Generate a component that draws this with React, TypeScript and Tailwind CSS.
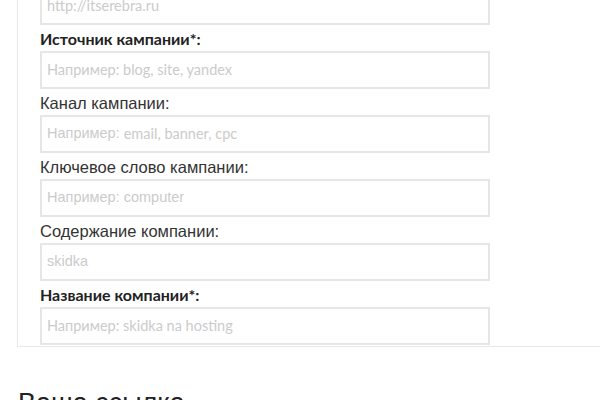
const ARIAL = "font-['Liberation_Sans',Arial,sans-serif]";
const LATO = "font-['Lato','Liberation_Sans',sans-serif]";

type Part = { text: string; lato?: boolean };

type Field = {
  label?: string;
  bold?: boolean;
  placeholder: Part[];
};

const fields: Field[] = [
  { placeholder: [{ text: "http://itserebra.ru", lato: true }] },
  {
    label: "Источник кампании*:",
    bold: true,
    placeholder: [{ text: "Например: blog, site, yandex", lato: true }],
  },
  {
    label: "Канал кампании:",
    placeholder: [{ text: "Например: " }, { text: "email, banner, cpc", lato: true }],
  },
  {
    label: "Ключевое слово кампании:",
    placeholder: [{ text: "Например: " }, { text: "computer" }],
  },
  {
    label: "Содержание компании:",
    placeholder: [{ text: "skidka" }],
  },
  {
    label: "Название компании*:",
    bold: true,
    placeholder: [{ text: "Например: skidka na hosting", lato: true }],
  },
];

function FieldRow({ field }: { field: Field }) {
  return (
    <div>
      {field.label && (
        <label
          className={
            field.bold
              ? `block h-[26px] pt-[1px] leading-[26px] text-[16px] font-bold text-[#222] ${LATO}`
              : `block h-[26px] pt-[1px] leading-[26px] text-[16.5px] text-[#333] ${ARIAL}`
          }
        >
          {field.label}
        </label>
      )}
      <div className="flex h-[38px] w-[450px] items-center border-2 border-[#e6e6e6] bg-white pl-[5px] text-[14.5px] text-[#cbcbcb]">
        {field.placeholder.map((p, i) => (
          <span key={i} className={`whitespace-pre ${p.lato ? LATO : ARIAL}`}>
            {p.text}
          </span>
        ))}
      </div>
    </div>
  );
}

export default function App() {
  return (
    <div className="h-[400px] w-[600px] overflow-hidden bg-white">
      <div className="-mt-[13px] ml-[17px] border-b border-l border-[#e8e8e8] pb-[1px] pl-[22px]">
        {fields.map((f, i) => (
          <FieldRow key={i} field={f} />
        ))}
      </div>
      <h2 className={`ml-[18px] mt-[38px] text-[27px] leading-[36px] text-[#222] ${ARIAL}`}>
        Ваша ссылка
      </h2>
    </div>
  );
}
